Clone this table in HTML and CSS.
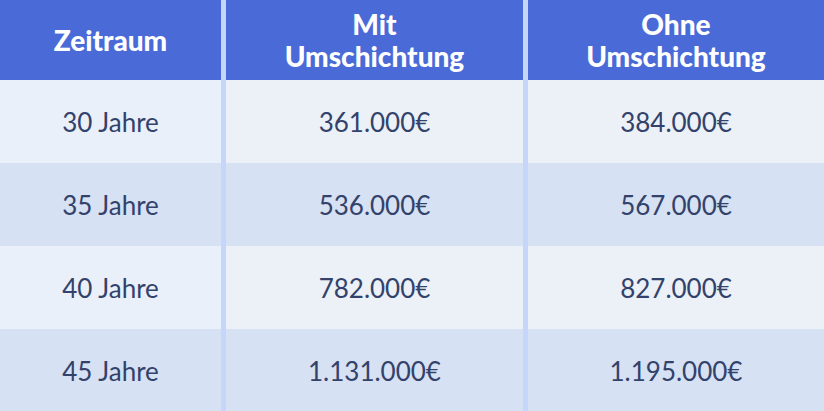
FILE: index.html
```html
<!DOCTYPE html>
<html lang="de">
<head>
<meta charset="utf-8">
<link rel="stylesheet" href="styles.css">
</head>
<body>
<div class="table">
  <div class="cell head">Zeitraum</div>
  <div class="cell head">Mit<br>Umschichtung</div>
  <div class="cell head">Ohne<br>Umschichtung</div>

  <div class="cell light first">30 Jahre</div>
  <div class="cell light">361.000€</div>
  <div class="cell light">384.000€</div>

  <div class="cell dark">35 Jahre</div>
  <div class="cell dark">536.000€</div>
  <div class="cell dark">567.000€</div>

  <div class="cell light first">40 Jahre</div>
  <div class="cell light">782.000€</div>
  <div class="cell light">827.000€</div>

  <div class="cell dark">45 Jahre</div>
  <div class="cell dark">1.131.000€</div>
  <div class="cell dark">1.195.000€</div>
</div>
</body>
</html>
```
FILE: styles.css
```css
html, body {
  margin: 0;
  padding: 0;
  background: #d6e1f3;
}
body {
  font-family: "Lato", "Noto Sans", sans-serif;
  width: 824px;
  height: 411px;
  overflow: hidden;
}
.table {
  display: grid;
  grid-template-columns: 221px 297px 1fr;
  grid-template-rows: 80px 83px 83px 83px 83px;
  column-gap: 5px;
  background: #c6d6fb;
}
.cell {
  display: flex;
  align-items: center;
  justify-content: center;
  text-align: center;
  font-size: 26px;
  color: #33426b;
}
.head {
  background: #4a6bd7;
  color: #ffffff;
  font-weight: 900;
  line-height: 32px;
  font-size: 28px;
}
.light {
  background: #ebf1f7;
}
.light.first {
  background: #eaf0f9;
}
.dark {
  background: #d6e1f3;
}
```
